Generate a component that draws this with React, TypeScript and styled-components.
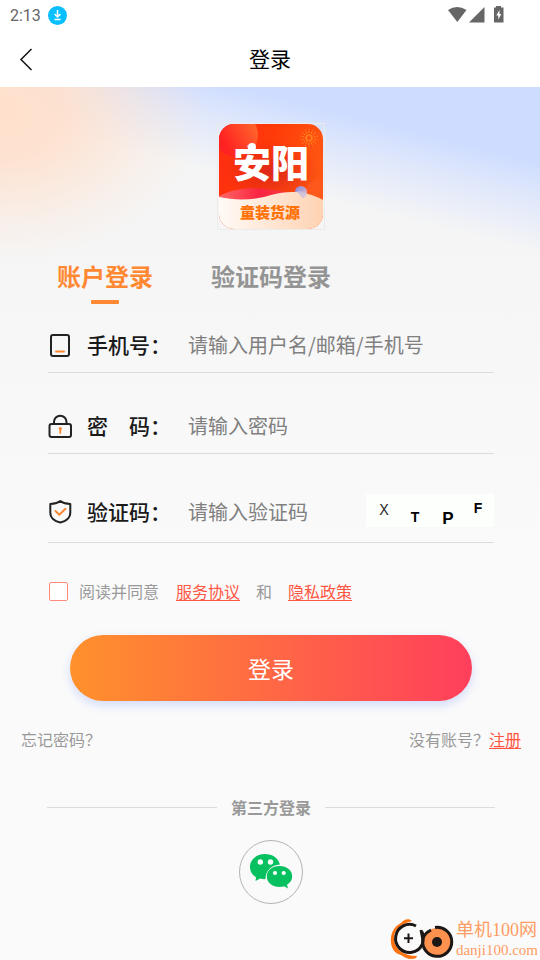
import React, { useState } from 'react';
import styled, { createGlobalStyle } from 'styled-components';

const GlobalStyle = createGlobalStyle`
  *, *::before, *::after { box-sizing: border-box; }
  body {
    margin: 0;
    background: #fafafa;
    font-family: "Noto Sans CJK SC", "Noto Sans", sans-serif;
  }
  button, input { font-family: inherit; }
`;

const Page = styled.div`
  min-height: 100vh;
  display: flex;
  flex-direction: column;
`;

const StatusBar = styled.div`
  height: 31px;
  padding: 0 35px 0 10px;
  display: flex;
  align-items: center;
  justify-content: space-between;
  background: #fff;
`;

const StatusGroup = styled.div`
  display: flex;
  align-items: center;
  gap: 7px;
`;

const Clock = styled.span`
  font: 400 16px/20px Roboto, sans-serif;
  color: #666;
`;

const NavBar = styled.header`
  height: 56px;
  padding: 0 14px 2px;
  display: grid;
  grid-template-columns: 28px 1fr 28px;
  align-items: center;
  background: #fff;
`;

const BackButton = styled.button`
  height: 32px;
  padding: 2px 0 0;
  border: 0;
  background: none;
  display: flex;
  align-items: center;
  cursor: pointer;
`;

const Title = styled.h1`
  margin: 0;
  font-size: 21px;
  line-height: 30px;
  font-weight: 400;
  text-align: center;
  color: #000;
`;

const Main = styled.main`
  flex: 1;
  display: flex;
  flex-direction: column;
  padding-top: 36px;
  background:
    radial-gradient(ellipse 38% 150px at 0 25px, #ffe0cc 0%, rgba(255, 224, 204, 0.9) 30%, rgba(255, 224, 204, 0.3) 72%, rgba(255, 224, 204, 0) 100%),
    linear-gradient(194deg, #cddcff 0, #cddcff 72px, rgba(220, 229, 252, 0.85) 108px, rgba(245, 245, 245, 0) 162px),
    linear-gradient(#f5f5f5 0, #f5f5f5 140px, #f7f7f7 260px, #fafafa 480px, #fafafa 100%);
`;

const Logo = styled.div`
  align-self: center;
  width: 108px;
  height: 107px;
  margin-left: 2px;
  border: 1px solid #ebebeb;
  display: flex;
  justify-content: center;
`;

const Tabs = styled.div`
  display: flex;
  gap: 58px;
  margin: 28px 57px 0;
`;

const Tab = styled.button<{ $active: boolean }>`
  padding: 0;
  border: 0;
  background: none;
  display: flex;
  flex-direction: column;
  align-items: center;
  gap: 6px;
  font-size: 24px;
  line-height: 36px;
  font-weight: 700;
  color: ${(p) => (p.$active ? '#ff8933' : '#949494')};
  cursor: pointer;
  &::after {
    content: "";
    width: 28px;
    height: 4px;
    border-radius: 1px;
    background: ${(p) => (p.$active ? '#ff8933' : 'transparent')};
  }
`;

const Form = styled.form`
  display: flex;
  flex-direction: column;
`;

const Field = styled.div<{ $height: number; $bottom: number }>`
  height: ${(p) => p.$height}px;
  padding-bottom: ${(p) => p.$bottom}px;
  margin: 0 46px 0 48px;
  border-bottom: 1px solid #dcdcdc;
  display: flex;
  align-items: flex-end;
`;

const FieldIcon = styled.svg`
  flex: none;
  width: 24px;
  height: 30px;
`;

const FieldLabel = styled.label`
  flex: none;
  width: 101px;
  margin-left: 15px;
  padding-bottom: 1px;
  font-size: 21px;
  line-height: 30px;
  font-weight: 500;
  white-space: pre;
  color: #1a1a1a;
`;

const TextInput = styled.input`
  flex: 1;
  min-width: 0;
  height: 30px;
  padding: 0;
  border: 0;
  outline: 0;
  background: none;
  font-size: 20px;
  line-height: 30px;
  color: #333;
  &::placeholder { color: #808080; opacity: 1; }
`;

const Captcha = styled.button`
  flex: none;
  width: 128px;
  height: 33px;
  padding: 0;
  border: 0;
  background: #fdfffd;
  cursor: pointer;
  svg { display: block; }
`;

const Agreement = styled.div`
  margin: 36px 48px 0 49px;
  display: flex;
  align-items: center;
  font-size: 16px;
  line-height: 24px;
  color: #999;
`;

const Checkbox = styled.input`
  appearance: none;
  flex: none;
  width: 19px;
  height: 19px;
  margin: 0 11px 0 0;
  border: 1px solid #ff8a7a;
  border-radius: 2px;
  background: #fff;
  &:checked { background: #ff5a48; }
`;

const AccentLink = styled.a`
  color: #ff5543;
  text-decoration: underline;
  text-decoration-thickness: 1px;
  text-underline-offset: 2px;
`;

const AgreementLinks = styled.span`
  display: flex;
  gap: 16px;
  margin-left: 17px;
`;

const Submit = styled.button`
  height: 66px;
  margin: 32px 68px 0 70px;
  border: 0;
  border-radius: 33px;
  background: linear-gradient(to right, #ff912c, #ff3f5c);
  box-shadow: 0 4px 10px rgba(120, 150, 255, 0.3);
  color: #fff;
  font-size: 23px;
  line-height: 32px;
  cursor: pointer;
`;

const HelpRow = styled.div`
  margin: 26px 19px 0 21px;
  display: flex;
  justify-content: space-between;
  font-size: 16px;
  line-height: 24px;
  color: #999;
`;

const PlainLink = styled.a`
  color: inherit;
  text-decoration: none;
`;

const Divider = styled.div`
  margin: 44px 45px 0 47px;
  display: flex;
  align-items: center;
  gap: 14px;
  font-size: 16px;
  line-height: 24px;
  font-weight: 700;
  color: #999;
  &::before, &::after {
    content: "";
    flex: 1;
    height: 1px;
    background: #dcdcdc;
  }
`;

const WechatButton = styled.button`
  align-self: center;
  width: 64px;
  height: 64px;
  margin: 21px 0 0 2px;
  padding: 0;
  border: 1px solid #b4b4b4;
  border-radius: 50%;
  background: none;
  display: flex;
  align-items: center;
  justify-content: center;
  cursor: pointer;
`;

const SiteMark = styled.a`
  align-self: flex-end;
  margin: 14px 2px 0 0;
  display: flex;
  align-items: flex-start;
  gap: 2px;
  text-decoration: none;
  color: #ff9c63;
`;

const SiteText = styled.span`
  display: flex;
  flex-direction: column;
  font-family: "Liberation Serif", "Noto Sans CJK SC", serif;
  font-weight: 400;
`;

const SiteName = styled.span`
  font-size: 18px;
  line-height: 24px;
`;

const SiteDomain = styled.span`
  font-size: 15px;
  line-height: 16px;
`;

function AppLogo() {
  return (
    <svg width="104" height="105" viewBox="0 0 104 105" role="img" aria-label="安阳童装货源">
      <defs>
        <clipPath id="logoClip"><rect width="104" height="105" rx="15" /></clipPath>
        <linearGradient id="logoBg" x1="0" y1="0" x2="1" y2="0.3">
          <stop offset="0" stopColor="#ff2c12" />
          <stop offset="0.5" stopColor="#ff3a08" />
          <stop offset="1" stopColor="#ff5612" />
        </linearGradient>
        <linearGradient id="logoBall" x1="0.3" y1="0.8" x2="1" y2="0.4">
          <stop offset="0" stopColor="#ff2222" />
          <stop offset="1" stopColor="#ff642c" />
        </linearGradient>
        <radialGradient id="logoShade">
          <stop offset="0" stopColor="#c81c24" stopOpacity="0.65" />
          <stop offset="1" stopColor="#d82318" stopOpacity="0" />
        </radialGradient>
        <linearGradient id="logoWave">
          <stop offset="0" stopColor="#ff6a66" />
          <stop offset="0.5" stopColor="#f92442" />
          <stop offset="1" stopColor="#fa4038" />
        </linearGradient>
        <linearGradient id="logoSand">
          <stop offset="0" stopColor="#fffaf6" />
          <stop offset="1" stopColor="#ffd2b2" />
        </linearGradient>
        <linearGradient id="logoDrop" x1="0" y1="0" x2="1" y2="1">
          <stop offset="0" stopColor="#7b8ee8" />
          <stop offset="1" stopColor="#f5b9b4" />
        </linearGradient>
      </defs>
      <g clipPath="url(#logoClip)">
        <rect width="104" height="105" fill="url(#logoBg)" />
        <circle cx="17" cy="11" r="22" fill="url(#logoBall)" />
        <ellipse cx="52" cy="48" rx="50" ry="32" fill="url(#logoShade)" />
        <circle cx="102" cy="72" r="17" fill="#ff5a20" opacity="0.7" />
        <g stroke="#ff8a20" strokeWidth="1" strokeDasharray="2 1">
          {Array.from({ length: 14 }, (_, i) => (
            <line key={i} x1="90" y1="12" x2="90" y2="5" transform={`rotate(${i * 360 / 14} 90 14)`} />
          ))}
        </g>
        <path d="M0 72C20 62 40 63 62 67L80 72L50 84L0 78Z" fill="url(#logoWave)" />
        <circle cx="82" cy="68" r="6" fill="url(#logoDrop)" />
        <path d="M0 73C18 77 36 76 52 71C70 66 88 67 104 76V105H0Z" fill="url(#logoSand)" />
        <path d="M78 67.500C81 67 84 67 88 69Q87 74 83 74Z" fill="#c9bfdf" opacity="0.8" />
        <text x="52" y="53" textAnchor="middle" fontFamily="Noto Sans CJK SC, sans-serif" fontWeight="900" fontSize="38" fill="#fff">安阳</text>
        <circle cx="33" cy="23" r="4" fill="#fff" />
        <text x="51" y="94" textAnchor="middle" fontFamily="Noto Sans CJK SC, sans-serif" fontWeight="900" fontSize="15" fill="#ff7208">童装货源</text>
      </g>
    </svg>
  );
}

function PhoneIcon() {
  return (
    <FieldIcon viewBox="0 0 24 30" fill="none" strokeLinecap="round">
      <rect x="3" y="5" width="18" height="21" rx="2" stroke="#222" strokeWidth="2" />
      <path d="M8 21.500H16" stroke="#ff8933" strokeWidth="2" />
    </FieldIcon>
  );
}

function LockIcon() {
  return (
    <FieldIcon viewBox="0 0 24 30" fill="none" strokeLinecap="round">
      <path d="M6 13V11a6 6 0 0 1 12.500 0V13" stroke="#222" strokeWidth="2" />
      <rect x="1.500" y="13" width="21.500" height="13" rx="2" stroke="#222" strokeWidth="2" />
      <circle cx="12.300" cy="17.500" r="1.600" fill="#ff8933" />
      <path d="M12.300 17.500V22" stroke="#ff8933" strokeWidth="1.800" />
    </FieldIcon>
  );
}

function ShieldIcon() {
  return (
    <FieldIcon viewBox="0 0 24 30" fill="none" strokeLinecap="round" strokeLinejoin="round">
      <path d="M12.300 4C9.500 6 6 7 2.300 7V15.500C2.300 21 7 24.500 12.300 25.500C17.600 24.500 22.300 21 22.300 15.500V7C18.600 7 15 6 12.300 4Z" stroke="#222" strokeWidth="2" />
      <path d="M7.500 14L11.300 17.800L17.500 11.800" stroke="#ff8933" strokeWidth="2" />
    </FieldIcon>
  );
}

function WechatIcon() {
  return (
    <svg width="44" height="38" viewBox="0 0 44 38" aria-hidden="true">
      <path d="M16 1C7.500 1 1 6.500 1 14c0 4.300 2.300 8 6 10.300L6.500 28l4.700-2.400c1.700.4 3.500.6 5.300.5C16.500 18 22 12 31 11.500 29 5 23.500 1 16 1Z" fill="#07c160" />
      <path d="M30.500 13C23 13 17.800 17.500 17.800 23.500S23.500 34 30.500 34c1.700 0 3.200-.2 4.600-.7L39 35.500l-1-3.700c3.200-2 5.200-5 5.200-8.300C43.200 17.500 38 13 30.500 13Z" fill="#07c160" />
      <g fill="#fff">
        <circle cx="11.300" cy="9" r="2.700" /><circle cx="21.500" cy="9" r="2.700" />
        <circle cx="26" cy="20" r="2.100" /><circle cx="34.700" cy="20" r="2.100" />
      </g>
    </svg>
  );
}

function SiteLogo() {
  return (
    <svg width="64" height="42" viewBox="0 0 64 42" fill="none" aria-hidden="true">
      <path d="M22 3C19 0 14 1 11 5C-2 11 -2 31 8 36C13 37 15 41 21 41C25 41 27 40 27 38C12 38 4 30 4 20C4 11 11 6 22 3Z" fill="#ff7410" />
      <circle cx="19" cy="20" r="13" fill="#fafafa" />
      <path d="M26 8A14 14 0 1 0 32 14" stroke="#1c1715" strokeWidth="3" />
      <path d="M18.500 15.500V25M14 20.300H23" stroke="#1c1715" strokeWidth="2" />
      <circle cx="47" cy="24" r="14" fill="#ff914f" />
      <path d="M45 9.500A14.500 14.500 0 1 1 33 21C34 16 37 14 41 12" stroke="#1c1715" strokeWidth="3" />
      <path d="M31 12C32 17 33 20 33 24" stroke="#1c1715" strokeWidth="3" />
      <circle cx="47" cy="24" r="5" fill="#1c1715" />
    </svg>
  );
}

export default function App() {
  const [tab, setTab] = useState(0);
  return (
    <Page>
      <GlobalStyle />
      <StatusBar>
        <StatusGroup>
          <Clock>2:13</Clock>
          <svg width="19" height="19" viewBox="0 0 19 19" aria-hidden="true">
            <circle cx="9.500" cy="9.500" r="9.500" fill="#08bfff" />
            <path d="M9.500 4V10.500M6.500 8L9.500 11L12.500 8M6.500 13.500H12.500" fill="none" stroke="#fff" strokeWidth="1.500" />
          </svg>
        </StatusGroup>
        <svg width="57" height="20" viewBox="0 0 57 20" fill="#666" aria-hidden="true">
          <path d="M0 4Q9 -2 18.500 4L9.300 16Z" />
          <path d="M36.500 1V16.500H21Z" />
          <path d="M48 0H53V1.500H55.500V16.500H46V1.500H48Z" />
          <path d="M51.500 4L48.300 9.500H50.300V13.500L53.300 8H51.500Z" fill="#fff" />
        </svg>
      </StatusBar>
      <NavBar>
        <BackButton type="button" aria-label="返回">
          <svg width="20" height="24" viewBox="0 0 20 24" fill="none" aria-hidden="true">
            <path d="M17.500 2L7 12.500L17.500 23" stroke="#111" strokeWidth="1.500" />
          </svg>
        </BackButton>
        <Title>登录</Title>
      </NavBar>
      <Main>
        <Logo><AppLogo /></Logo>
        <Tabs role="tablist">
          {['账户登录', '验证码登录'].map((name, i) => (
            <Tab key={name} type="button" role="tab" aria-selected={tab === i} $active={tab === i} onClick={() => setTab(i)}>
              {name}
            </Tab>
          ))}
        </Tabs>
        <Form onSubmit={(e) => e.preventDefault()}>
          <Field $height={69} $bottom={12}>
            <PhoneIcon />
            <FieldLabel htmlFor="account">手机号：</FieldLabel>
            <TextInput id="account" placeholder="请输入用户名/邮箱/手机号" />
          </Field>
          <Field $height={81} $bottom={12}>
            <LockIcon />
            <FieldLabel htmlFor="password">密　码：</FieldLabel>
            <TextInput id="password" type="password" placeholder="请输入密码" />
          </Field>
          <Field $height={89} $bottom={15}>
            <ShieldIcon />
            <FieldLabel htmlFor="code">验证码：</FieldLabel>
            <TextInput id="code" placeholder="请输入验证码" />
            <Captcha type="button" aria-label="刷新验证码">
              <svg width="128" height="33" viewBox="0 0 128 33" fontFamily="Liberation Sans, sans-serif" fontWeight="700" textAnchor="middle">
                <text x="18" y="21" fontSize="16" fontFamily="Liberation Mono, monospace" fontWeight="400" fill="#333">X</text>
                <text x="49" y="28" fontSize="14">T</text>
                <text x="82" y="30" fontSize="17">P</text>
                <text x="112" y="19" fontSize="14">F</text>
              </svg>
            </Captcha>
          </Field>
          <Agreement>
            <Checkbox id="agree" type="checkbox" />
            <label htmlFor="agree">阅读并同意</label>
            <AgreementLinks>
              <AccentLink href="#terms">服务协议</AccentLink>
              <span>和</span>
              <AccentLink href="#privacy">隐私政策</AccentLink>
            </AgreementLinks>
          </Agreement>
          <Submit type="submit">登录</Submit>
        </Form>
        <HelpRow>
          <PlainLink href="#forgot">忘记密码？</PlainLink>
          <span>没有账号？<AccentLink href="#register">注册</AccentLink></span>
        </HelpRow>
        <Divider>第三方登录</Divider>
        <WechatButton type="button" aria-label="微信登录"><WechatIcon /></WechatButton>
        <SiteMark href="#site">
          <SiteLogo />
          <SiteText>
            <SiteName>单机100网</SiteName>
            <SiteDomain>danji100.com</SiteDomain>
          </SiteText>
        </SiteMark>
      </Main>
    </Page>
  );
}
